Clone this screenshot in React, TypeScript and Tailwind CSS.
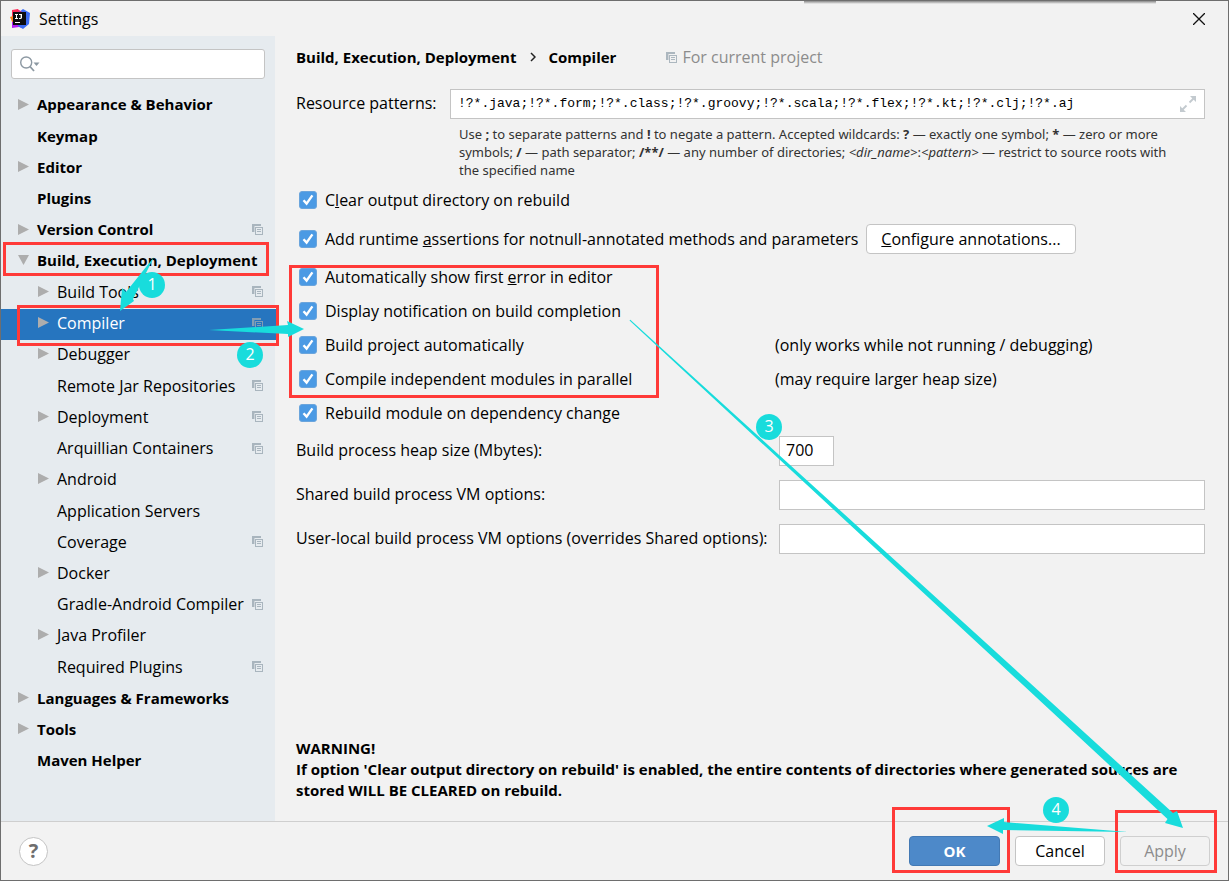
import { useState, type ReactNode } from 'react'

type Item = {
  label: string
  level: 0 | 1
  arrow?: 'right' | 'down'
  project?: boolean
}

const items: Item[] = [
  { label: 'Appearance & Behavior', level: 0, arrow: 'right' },
  { label: 'Keymap', level: 0 },
  { label: 'Editor', level: 0, arrow: 'right' },
  { label: 'Plugins', level: 0 },
  { label: 'Version Control', level: 0, arrow: 'right', project: true },
  { label: 'Build, Execution, Deployment', level: 0, arrow: 'down' },
  { label: 'Build Tools', level: 1, arrow: 'right', project: true },
  { label: 'Compiler', level: 1, arrow: 'right', project: true },
  { label: 'Debugger', level: 1, arrow: 'right' },
  { label: 'Remote Jar Repositories', level: 1, project: true },
  { label: 'Deployment', level: 1, arrow: 'right', project: true },
  { label: 'Arquillian Containers', level: 1, project: true },
  { label: 'Android', level: 1, arrow: 'right' },
  { label: 'Application Servers', level: 1 },
  { label: 'Coverage', level: 1, project: true },
  { label: 'Docker', level: 1, arrow: 'right' },
  { label: 'Gradle-Android Compiler', level: 1, project: true },
  { label: 'Java Profiler', level: 1, arrow: 'right' },
  { label: 'Required Plugins', level: 1, project: true },
  { label: 'Languages & Frameworks', level: 0, arrow: 'right' },
  { label: 'Tools', level: 0, arrow: 'right' },
  { label: 'Maven Helper', level: 0 },
]

function ProjectIcon() {
  return (
    <svg viewBox="0 0 11 11" aria-hidden="true" className="w-[11px] h-[11px] shrink-0" shapeRendering="crispEdges">
      <path d="M0 0h9v2H2v6H0z" fill="#9aa7b1" fillOpacity="0.8" />
      <path d="M2 2h1v6H2z" fill="#9aa7b1" fillOpacity="0.35" />
      <path d="M3 3h8v8H3zM4 4v6h6V4z" fillRule="evenodd" fill="#9aa7b1" fillOpacity="0.8" />
      <path d="M5 5h4v1H5zM5 7h4v1H5z" fill="#9aa7b1" fillOpacity="0.8" />
    </svg>
  )
}

function TreeArrow({ dir }: { dir?: 'right' | 'down' }) {
  return (
    <svg viewBox="0 0 11 12" aria-hidden="true" className="w-[11px] h-3 shrink-0" fill="#adadad">
      {dir === 'right' && <path d="M0 0L11 5.5L0 11z" />}
      {dir === 'down' && <path d="M0 0h11L5.5 10z" />}
    </svg>
  )
}

function Logo() {
  return (
    <svg viewBox="0 0 20 20" aria-hidden="true" className="w-5 h-5">
      <path d="M2 1l6-1 3 4-3 9-6 1z" fill="#fe2857" />
      <path d="M0 8l3-1 4 6-4 2z" fill="#fc801d" />
      <path d="M2 13l6-2 4 8-3-1-7 1z" fill="#af1df5" />
      <path d="M9 3l4-3 7 4-1 11-6 5-5-3z" fill="#3b6cf6" />
      <path d="M9 1l3 2-1 4-4-2z" fill="#d92b8a" />
      <path d="M3 3h13v13H3z" fill="#0c0c10" />
      <path d="M5 5h3v1H7v3h1v1H5V9h1V6H5zM9 5h3v4l-1 1H9V9h1.6V6H9zM5 13h5v1H5z" fill="#fff" />
    </svg>
  )
}

function Check({ children }: { children: ReactNode }) {
  return (
    <label className="flex items-center gap-2 pl-[3px] whitespace-nowrap">
      <span className="grid w-[18px] h-[18px]">
        <input
          type="checkbox"
          defaultChecked
          className="peer col-start-1 row-start-1 appearance-none w-[18px] h-[18px] rounded-[3px] border border-[#6ba5dc] bg-white checked:bg-[#4b9ae4]"
        />
        <svg
          viewBox="0 0 18 18"
          aria-hidden="true"
          className="col-start-1 row-start-1 w-[18px] h-[18px] pointer-events-none opacity-0 peer-checked:opacity-100"
        >
          <path d="M4.5 9.2L7.6 12.6L13.4 4.4" fill="none" stroke="#fff" strokeWidth="2.4" />
        </svg>
      </span>
      <span>{children}</span>
    </label>
  )
}

function Badge({ n, className }: { n: number; className: string }) {
  return (
    <span className={`absolute w-[26px] h-[26px] rounded-full bg-[#18dcdc] text-white text-center leading-6 ${className}`}>
      {n}
    </span>
  )
}

const fieldClass = 'h-[30px] min-w-0 border border-[#c4c4c4] bg-white px-[6px] pb-[2px] outline-none'

export default function App() {
  const [selected, setSelected] = useState('Compiler')

  return (
    <div className="relative flex flex-col min-h-screen border border-[#6e6e6e] bg-[#f2f2f2] text-black text-base font-['Open_Sans','Noto_Sans',sans-serif]">
      <header className="flex items-center h-[35px] pl-[9px] pr-[23px] gap-[9px]">
        <Logo />
        <h1 className="grow">Settings</h1>
        <button type="button" aria-label="Close">
          <svg viewBox="0 0 12 12" className="w-3 h-3" stroke="#111" strokeWidth="1.3">
            <path d="M0 0l12 12M12 0L0 12" />
          </svg>
        </button>
      </header>

      <div className="flex grow">
        <nav aria-label="Settings" className="w-[274px] shrink-0 bg-[#e6ebef]">
          <div className="flex items-center h-[30px] mt-[13px] mx-[10px] mb-[11px] px-2 border border-[#c4c4c4] rounded-[3px] bg-white">
            <svg viewBox="0 0 20 16" aria-hidden="true" className="w-5 h-4 shrink-0">
              <circle cx="6.2" cy="6.5" r="5.5" fill="none" stroke="#8c98a2" strokeWidth="1.4" />
              <path d="M10 10.5l4 4.5" stroke="#8c98a2" strokeWidth="1.8" />
              <path d="M13.5 6.5h6L16.5 10z" fill="#8c98a2" />
            </svg>
            <input type="text" aria-label="Search settings" className="grow min-w-0 outline-none" />
          </div>
          <ul className="grid auto-rows-fr h-[687px]">
            {items.map((item) => (
              <li key={item.label} className="grid">
                <button
                  type="button"
                  onClick={() => setSelected(item.label)}
                  className={`flex items-center gap-2 pr-[13px] pb-[2px] text-left whitespace-nowrap ${
                    item.level === 0 ? 'pl-[17px] text-[15px] font-bold' : 'pl-[37px]'
                  } ${selected === item.label ? 'bg-[#2675bf] text-white' : ''}`}
                >
                  <TreeArrow dir={item.arrow} />
                  <span className="grow">{item.label}</span>
                  {item.project && <ProjectIcon />}
                </button>
              </li>
            ))}
          </ul>
        </nav>

        <main className="flex flex-col grow min-w-0 pl-[21px] pr-[23px] pb-5">
          <div className="flex items-center h-[42px]">
            <h2 className="flex items-center gap-[13px] text-[15px] font-bold">
              Build, Execution, Deployment
              <svg viewBox="0 0 6 10" aria-hidden="true" className="w-[6px] h-[10px]" fill="none" stroke="#222" strokeWidth="1.5">
                <path d="M1 1l4 4-4 4" />
              </svg>
              Compiler
            </h2>
            <span className="flex items-center gap-[5px] ml-[50px] text-[#8c8c8c]">
              <ProjectIcon />
              For current project
            </span>
          </div>

          <div className="flex mt-[11px]">
            <label htmlFor="patterns" className="w-[154px] shrink-0 leading-7">
              Resource patterns:
            </label>
            <div className="grow min-w-0">
              <div className="flex items-center h-[30px] pr-2 border border-[#c4c4c4] bg-white">
                <input
                  id="patterns"
                  type="text"
                  defaultValue="!?*.java;!?*.form;!?*.class;!?*.groovy;!?*.scala;!?*.flex;!?*.kt;!?*.clj;!?*.aj"
                  className="grow min-w-0 pl-[7px] outline-none text-[13px] font-['Liberation_Mono',monospace]"
                />
                <button type="button" aria-label="Expand">
                  <svg viewBox="0 0 16 16" className="w-4 h-4" fill="#c3cacf" stroke="#c3cacf">
                    <path d="M10 0h6v6zM0 10v6h6z" stroke="none" />
                    <path d="M9.5 6.5l4-4M2.5 13.5l4-4" strokeWidth="1.8" />
                  </svg>
                </button>
              </div>
              <p className="pt-[6px] pl-[9px] pr-6 text-[13px] leading-[18px] text-[#333] font-['Noto_Sans',sans-serif]">
                Use <b>;</b> to separate patterns and <b>!</b> to negate a pattern. Accepted wildcards: <b>?</b> — exactly
                one symbol; <b>*</b> — zero or more symbols; <b>/</b> — path separator; <b>/**/</b> — any number of
                directories; <i>&lt;dir_name&gt;</i>:<i>&lt;pattern&gt;</i> — restrict to source roots with the specified
                name
              </p>
            </div>
          </div>

          <div className="grid auto-rows-[34px] items-center mt-1">
            <Check>
              C<u>l</u>ear output directory on rebuild
            </Check>
          </div>
          <div className="flex items-center gap-2 h-[43px]">
            <Check>
              Add runtime <u>a</u>ssertions for notnull-annotated methods and parameters
            </Check>
            <button type="button" className="h-[30px] px-[14px] border border-[#c4c4c4] rounded-[4px] bg-white whitespace-nowrap">
              <u>C</u>onfigure annotations...
            </button>
          </div>
          <div className="grid grid-cols-[479px_1fr] auto-rows-[34px] items-center">
            <Check>
              Automatically show first <u>e</u>rror in editor
            </Check>
            <span />
            <Check>Display notification on build completion</Check>
            <span />
            <Check>Build project automatically</Check>
            <span>(only works while not running / debugging)</span>
            <Check>Compile independent modules in parallel</Check>
            <span>(may require larger heap size)</span>
            <Check>Rebuild module on dependency change</Check>
          </div>

          <div className="grid grid-cols-[483px_1fr] gap-y-[14px] items-center mt-[6px]">
            <label htmlFor="heap" className="pb-[2px]">
              Build process heap size (Mbytes):
            </label>
            <input id="heap" type="text" defaultValue="700" className={`w-[55px] ${fieldClass}`} />
            <label htmlFor="shared" className="pb-[2px]">
              Shared build process VM options:
            </label>
            <input id="shared" type="text" className={fieldClass} />
            <label htmlFor="local" className="pb-[2px]">
              User-local build process VM options (overrides Shared options):
            </label>
            <input id="local" type="text" className={fieldClass} />
          </div>

          <p className="mt-auto text-[15px] font-bold leading-[21px]">
            WARNING!
            <br />
            If option 'Clear output directory on rebuild' is enabled, the entire contents of directories where generated
            sources are stored WILL BE CLEARED on rebuild.
          </p>
        </main>
      </div>

      <footer className="flex items-center gap-[15px] h-[59px] pl-[18px] pr-[18px] border-t border-[#cfcfcf]">
        <button
          type="button"
          aria-label="Help"
          className="w-[29px] h-[29px] mr-auto border border-[#c4c4c4] rounded-full bg-white text-[#6e6e6e] text-xl leading-none font-bold"
        >
          ?
        </button>
        <button type="button" className="w-[91px] h-[30px] border border-[#4379b4] rounded-[4px] bg-[#4d89c9] text-white text-[15px] font-bold">
          OK
        </button>
        <button type="button" className="w-[90px] h-[30px] border border-[#c4c4c4] rounded-[4px] bg-white">
          Cancel
        </button>
        <button type="button" disabled className="w-[90px] h-[30px] border border-[#cfcfcf] rounded-[4px] text-[#8c8c8c]">
          Apply
        </button>
      </footer>

      {/* Shadow of the window above */}
      <div className="absolute top-0 right-[72px] w-[352px] h-[3px] bg-linear-to-b from-[#8a8a8a] to-[#f2f2f2]" />

      {/* Step markers drawn over the dialog */}
      <div className="absolute -inset-px pointer-events-none">
        <span className="absolute left-[3px] top-[242px] w-[266px] h-[34px] border-3 border-[#ff3a38]" />
        <span className="absolute left-[17px] top-[305px] w-[262px] h-[41px] border-3 border-[#ff3a38]" />
        <span className="absolute left-[289px] top-[265px] w-[370px] h-[133px] border-3 border-[#ff3a38]" />
        <span className="absolute right-[219px] bottom-2 w-[118px] h-[66px] border-3 border-[#ff3a38]" />
        <span className="absolute right-3 bottom-2 w-[102px] h-[63px] border-3 border-[#ff3a38]" />
        <svg viewBox="0 0 1229 881" aria-hidden="true" className="absolute left-0 top-0 w-[1229px] h-[881px]" fill="#18dcdc">
          <path d="M154 257L133 299L134 301L120 311L122 288L126 292Z" />
          <path d="M209 330L288 325L287 321L304 329L288 337L288 334Z" />
          <path d="M629.5 320.5L630.3 319.7L1173 813L1177 811L1183 828L1165 823L1167.5 819Z" />
          <path d="M1128 832L1003 830L1003 834L987 826L1004 818L1004 822Z" />
        </svg>
        <Badge n={1} className="left-[139px] top-[272px]" />
        <Badge n={2} className="left-[237px] top-[342px]" />
        <Badge n={3} className="left-[756px] top-[414px]" />
        <Badge n={4} className="right-[160px] bottom-[58px]" />
      </div>
    </div>
  )
}
